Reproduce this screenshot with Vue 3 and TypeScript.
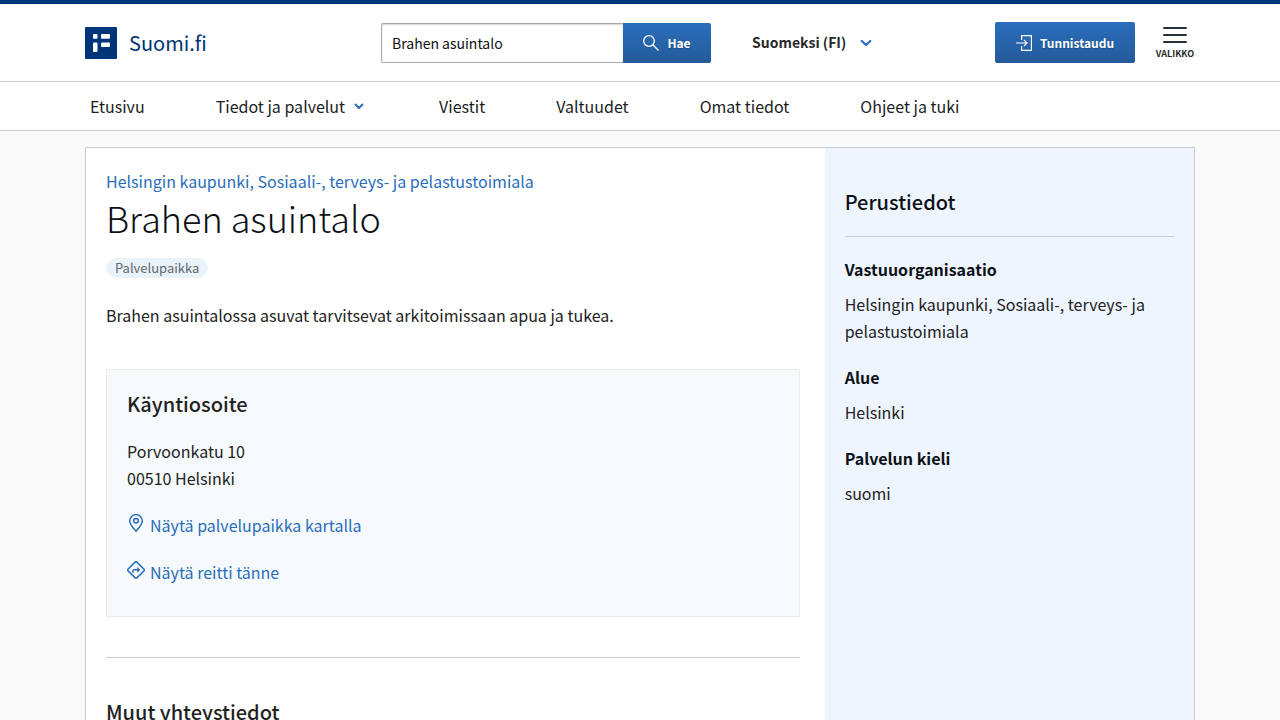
<script setup lang="ts">
import { ref } from 'vue'

interface NavItem {
  label: string
  expandable?: boolean
}

interface Fact {
  term: string
  value: string
}

const query = ref('Brahen asuintalo')

const navItems: NavItem[] = [
  { label: 'Etusivu' },
  { label: 'Tiedot ja palvelut', expandable: true },
  { label: 'Viestit' },
  { label: 'Valtuudet' },
  { label: 'Omat tiedot' },
  { label: 'Ohjeet ja tuki' },
]

const facts: Fact[] = [
  { term: 'Vastuuorganisaatio', value: 'Helsingin kaupunki, Sosiaali-, terveys- ja pelastustoimiala' },
  { term: 'Alue', value: 'Helsinki' },
  { term: 'Palvelun kieli', value: 'suomi' },
]
</script>

<template>
  <div class="page">
    <header class="header">
      <div class="container header-row">
        <a class="logo" href="#">
          <svg width="32" height="32" viewBox="0 0 32 32" aria-hidden="true">
            <rect width="32" height="32" rx="1" fill="#003479" />
            <g fill="#fff">
              <rect x="8" y="7" width="4.500" height="4.700" rx="1" />
              <rect x="16" y="7" width="9" height="4.700" rx="1" />
              <rect x="8" y="15.500" width="4.500" height="9.500" rx="1" />
              <rect x="16" y="15.500" width="9" height="4.500" rx="1" />
            </g>
          </svg>
          <span>Suomi.fi</span>
        </a>

        <form class="search" role="search" @submit.prevent>
          <input v-model="query" type="text" aria-label="Hae sivustolta" />
          <button type="submit" class="primary">
            <svg width="16" height="16" viewBox="0 0 16 16" fill="none" stroke="#fff" stroke-width="1.3" aria-hidden="true">
              <circle cx="6" cy="6" r="5.3" />
              <path d="M9.8 9.8 15.5 15.5" />
            </svg>
            Hae
          </button>
        </form>

        <button type="button" class="language">
          Suomeksi (FI)
          <svg width="12" height="8" viewBox="0 0 12 8" fill="none" stroke="#2a6ebb" stroke-width="2.200" stroke-linecap="round" stroke-linejoin="round" aria-hidden="true">
            <path d="M1.700 2 6 6l4.300-4" />
          </svg>
        </button>

        <button type="button" class="primary login">
          <svg width="16" height="16" viewBox="0 0 16 16" fill="none" stroke="#fff" stroke-width="1.2" aria-hidden="true">
            <path d="M5.6 5V.6h9.8v14.8H5.6V11M0 8h11M8 5l3 3-3 3" />
          </svg>
          Tunnistaudu
        </button>

        <button type="button" class="menu">
          <svg width="24" height="18" viewBox="0 0 24 18" fill="none" stroke="#29303a" stroke-width="2" stroke-linecap="round" aria-hidden="true">
            <path d="M1 2h22M1 9h22M1 16h22" />
          </svg>
          VALIKKO
        </button>
      </div>
    </header>

    <nav class="nav" aria-label="Päävalikko">
      <ul class="container nav-list">
        <li v-for="item in navItems" :key="item.label">
          <a href="#">
            {{ item.label }}
            <svg v-if="item.expandable" width="15" height="8" viewBox="0 0 15 8" fill="none" stroke="#2a6ebb" stroke-width="2" stroke-linecap="round" stroke-linejoin="round" aria-hidden="true">
              <path d="M2.500 2.500 6 6l3.500-3.500" />
            </svg>
          </a>
        </li>
      </ul>
    </nav>

    <div class="container">
      <div class="card">
        <main class="content">
          <a class="organization" href="#">Helsingin kaupunki, Sosiaali-, terveys- ja pelastustoimiala</a>
          <h1>Brahen asuintalo</h1>
          <span class="tag">Palvelupaikka</span>
          <p class="summary">Brahen asuintalossa asuvat tarvitsevat arkitoimissaan apua ja tukea.</p>

          <section class="address">
            <h2>Käyntiosoite</h2>
            <p>Porvoonkatu 10<br />00510 Helsinki</p>
            <a class="icon-link" href="#">
              <svg width="18" height="18" viewBox="0 0 18 18" fill="none" stroke="#2a6ebb" stroke-width="1.500" aria-hidden="true">
                <path d="M9 17.200C7 14.800 2.700 10.500 2.700 6.900a6.300 6.300 0 0 1 12.600 0C15.300 10.500 11 14.800 9 17.200Z" stroke-linejoin="round" />
                <circle cx="9" cy="6.700" r="2.300" />
              </svg>
              Näytä palvelupaikka kartalla
            </a>
            <a class="icon-link" href="#">
              <svg width="18" height="18" viewBox="0 0 18 18" fill="none" stroke="#2a6ebb" stroke-width="1.500" stroke-linejoin="round" aria-hidden="true">
                <path d="M8.100 1.100a1.300 1.300 0 0 1 1.800 0l7 7a1.300 1.300 0 0 1 0 1.800l-7 7a1.300 1.300 0 0 1-1.800 0l-7-7a1.300 1.300 0 0 1 0-1.800Z" />
                <path d="M5.800 11.800V10.300a1.500 1.500 0 0 1 1.500-1.500h4" />
                <path d="M10.500 6.400 13 8.800l-2.500 2.400Z" fill="#2a6ebb" stroke-width=".6" />
              </svg>
              Näytä reitti tänne
            </a>
          </section>

          <section class="contacts">
            <h2>Muut yhteystiedot</h2>
          </section>
        </main>

        <aside class="sidebar">
          <h2>Perustiedot</h2>
          <dl>
            <template v-for="fact in facts" :key="fact.term">
              <dt>{{ fact.term }}</dt>
              <dd>{{ fact.value }}</dd>
            </template>
          </dl>
        </aside>
      </div>
    </div>
  </div>
</template>

<style>
html {
  height: 100%;
  overflow: hidden;
}

body {
  height: 100%;
  margin: 0;
  overflow: hidden;
  background: #fafafa;
}
</style>

<style scoped>
.page {
  color: #222;
  font-family: "Noto Sans CJK SC", "Noto Sans", sans-serif;
  font-size: 16px;
  line-height: 27px;
}

.page * {
  box-sizing: border-box;
}

.container {
  width: 100%;
  max-width: 1140px;
  margin: 0 auto;
  padding: 0 15px;
}

a {
  color: #2a6ebb;
  text-decoration: none;
}

button,
input {
  margin: 0;
  font: inherit;
}

button {
  border: 0;
  background: none;
  cursor: pointer;
}

svg {
  flex: none;
}

.header {
  border-top: 4px solid #003479;
  border-bottom: 1px solid #c8cdd0;
  background: #fff;
}

.header-row {
  display: flex;
  align-items: center;
  height: 77px;
}

.logo {
  display: flex;
  align-items: center;
  gap: 12px;
  width: 296px;
  color: #003479;
  font-size: 20px;
}

.search {
  display: flex;
  width: 330px;
}

.search input {
  flex: 1;
  min-width: 0;
  height: 40px;
  padding: 0 10px;
  border: 1px solid #a5acb1;
  border-right: 0;
  border-radius: 2px 0 0 2px;
  background: #fff;
  box-shadow: inset 0 1px 2px rgba(41, 41, 41, 0.2);
  color: #111;
  font-size: 14px;
}

.primary {
  display: flex;
  align-items: center;
  justify-content: center;
  gap: 8px;
  height: 40px;
  padding: 0 20px;
  border-radius: 2px;
  background: linear-gradient(#2a6ebb, #235a9a);
  color: #fff;
  font-size: 12px;
  font-weight: 700;
  text-shadow: 0 1px 1px #1d4d84;
}

.search .primary {
  width: 88px;
  border-radius: 0 2px 2px 0;
}

.language {
  display: flex;
  align-items: center;
  gap: 14px;
  margin-left: 41px;
  padding: 0;
  color: #29292a;
  font-size: 14px;
  font-weight: 700;
}

.login {
  min-width: 140px;
  height: 41px;
  margin-left: auto;
}

.menu {
  display: flex;
  flex-direction: column;
  align-items: center;
  gap: 4px;
  width: 40px;
  margin-left: 20px;
  padding: 0;
  color: #29292a;
  font-size: 9px;
  font-weight: 700;
  line-height: 12px;
}

.nav {
  border-bottom: 1px solid #c8cdd0;
  background: #fff;
}

.nav-list {
  display: flex;
  gap: 71px;
  height: 48px;
  padding: 0 20px;
  list-style: none;
}

.nav-list a {
  display: flex;
  align-items: center;
  gap: 8px;
  height: 48px;
  color: #1a1d22;
}

.card {
  display: grid;
  grid-template-columns: 2fr 1fr;
  min-height: 800px;
  margin-top: 16px;
  border: 1px solid #c8cdd0;
  background: #fff;
}

.content {
  padding: 20px 25px 20px 20px;
}

h1,
h2,
p,
dl,
dd {
  margin: 0;
}

h1 {
  margin-bottom: 19px;
  color: #0d1116;
  font-size: 36px;
  font-weight: 300;
  line-height: 44px;
}

h2 {
  font-size: 20px;
  font-weight: 500;
  line-height: 30px;
}

.tag {
  display: block;
  width: fit-content;
  padding: 0 9px;
  border-radius: 10px;
  background: #eaf2fa;
  color: #5f686d;
  font-size: 13px;
  line-height: 20px;
}

.summary {
  margin: 24px 0 40px;
}

.address {
  padding: 19px 20px 30px;
  border: 1px solid #e9edf0;
  background: #f6fafd;
}

.address p {
  margin-top: 19px;
}

.icon-link {
  display: flex;
  gap: 5px;
  margin-top: 20px;
}

.icon-link svg {
  margin-top: 2px;
}

.contacts {
  margin-top: 40px;
  padding-top: 39px;
  border-top: 1px solid #c8cdd0;
}

.sidebar {
  padding: 39px 20px;
  background: #eef5ff;
}

.sidebar h2 {
  padding-bottom: 19px;
  border-bottom: 1px solid #c8cdd0;
  color: #0d1116;
}

dt {
  margin: 19px 0 8px;
  color: #0d1116;
  font-weight: 700;
}
</style>
